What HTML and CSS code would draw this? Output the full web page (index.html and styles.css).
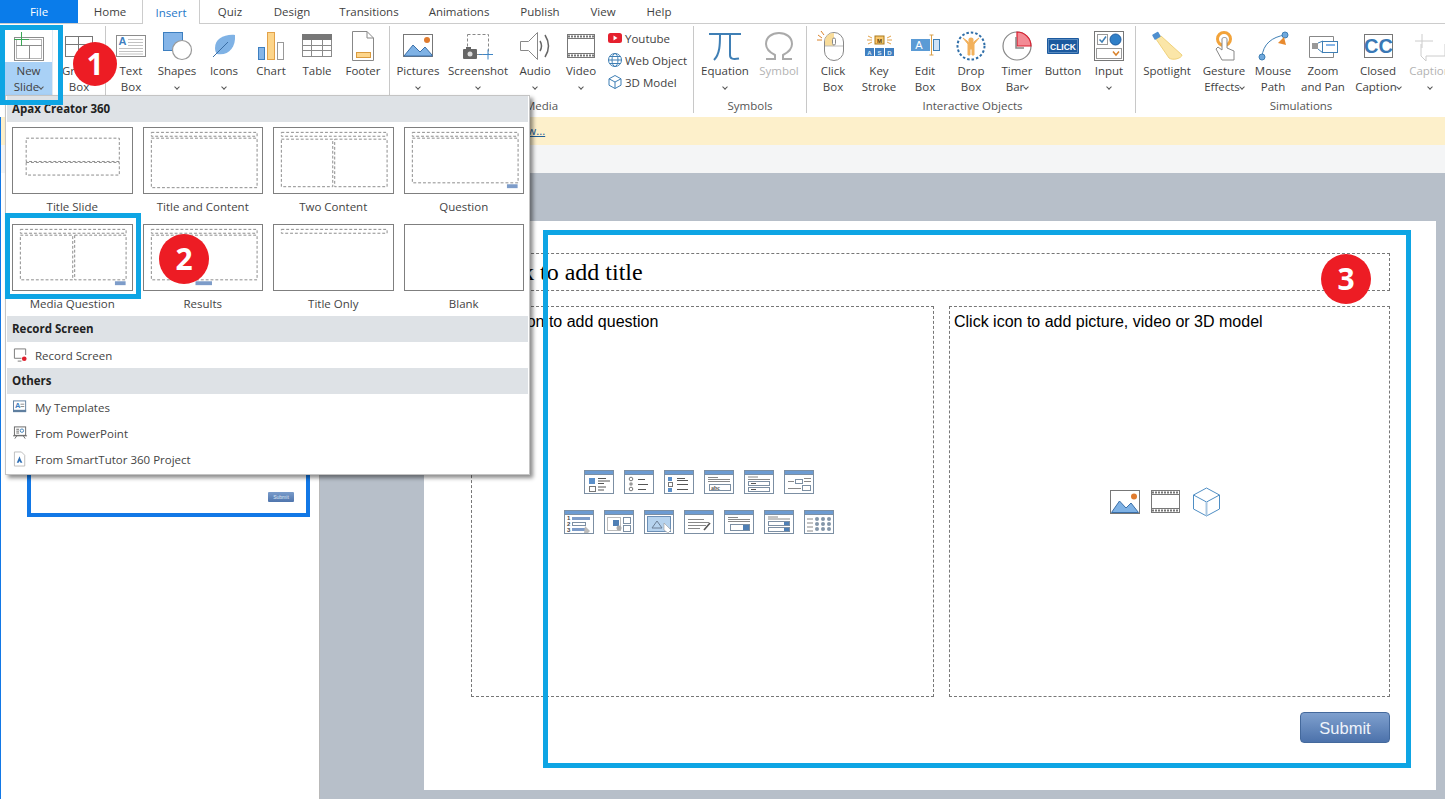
FILE: index.html
```html
<!DOCTYPE html>
<html lang="en">
<head>
    <meta charset="UTF-8">
    <meta name="viewport" content="width=device-width, initial-scale=1.0">
    <title>Apax Creator 360</title>
    <link rel="stylesheet" href="styles.css">
</head>
<body>
<div class="app">
    <!-- shared window frame for the question icons -->
    <svg class="sprite" width="0" height="0">
        <symbol id="qframe" viewBox="0 0 30 24">
            <rect x="0.5" y="0.5" width="29" height="23" fill="#fff" stroke="#7c8fa3"/>
            <rect x="0.5" y="0.5" width="29" height="4" fill="#6c9bd2" stroke="#7c8fa3"/>
        </symbol>
    </svg>

    <div class="tabs">
        <div class="tab tab-file">File</div>
        <div class="tab w64">Home</div>
        <div class="tab tab-active">Insert</div>
        <div class="tab w60">Quiz</div>
        <div class="tab w64">Design</div>
        <div class="tab w90">Transitions</div>
        <div class="tab w90">Animations</div>
        <div class="tab w72">Publish</div>
        <div class="tab w54">View</div>
        <div class="tab w58">Help</div>
    </div>

    <div class="ribbon">
        <div class="group g-slides">
            <div class="items">
                <div class="item item-new w48">
                    <svg class="ic" viewBox="0 0 32 32"><rect x="1.5" y="7.5" width="29" height="23" fill="#fff" stroke="#8c8c8c"/><rect x="3.5" y="9.5" width="25" height="19" fill="none" stroke="#b5b5b5"/><path d="M3 15.5H29M16.5 15V29" stroke="#8c8c8c" fill="none"/><path d="M1 9.5H16M8.5 2V16" stroke="#3aa655" fill="none"/></svg>
                    <div class="lbl">New<br>Slide<i class="chev"></i></div>
                </div>
                <div class="item w52">
                    <svg class="ic" viewBox="0 0 32 32"><rect x="2.5" y="6.5" width="27" height="20" fill="#fff" stroke="#777"/><path d="M2 14.5H30M15.5 6V27" stroke="#777" fill="none"/></svg>
                    <div class="lbl">Group<br>Box</div>
                </div>
            </div>
            <div class="group-name"></div>
        </div>

        <div class="group g-text">
            <div class="items">
                <div class="item w50">
                    <svg class="ic" viewBox="0 0 32 32"><rect x="1.5" y="5.5" width="29" height="21" fill="#fff" stroke="#8c8c8c"/><text x="3.5" y="14.5" class="svg-a">A</text><path d="M13 9.5H28M13 12.5H28M13 15.5H28M4 18.5H28M4 21.5H28M4 24H28" stroke="#c2c2c2" fill="none"/></svg>
                    <div class="lbl">Text<br>Box</div>
                </div>
                <div class="item w42">
                    <svg class="ic" viewBox="0 0 32 32"><rect x="2.5" y="2.5" width="19" height="18" fill="#85b5e8" stroke="#3d7fc0"/><circle cx="21" cy="20" r="9.5" fill="#fff" stroke="#999" stroke-width="1.2"/></svg>
                    <div class="lbl">Shapes<br><i class="chev"></i></div>
                </div>
                <div class="item w52">
                    <svg class="ic" viewBox="0 0 32 32"><path d="M27 5C16 4 7 9 7 18C7 21 8 23 9 24C20 26 28 18 27 5Z" fill="#7fb2e5"/><path d="M5 27L20 12" stroke="#3b6ea5" fill="none"/></svg>
                    <div class="lbl">Icons<br><i class="chev"></i></div>
                </div>
                <div class="item w42">
                    <svg class="ic" viewBox="0 0 32 32"><rect x="3.5" y="17.5" width="6" height="12" fill="#85b5e8" stroke="#3d7fc0"/><rect x="12.5" y="2.5" width="7" height="27" fill="#fdd58a" stroke="#e2a24a"/><rect x="22.5" y="12.5" width="6" height="17" fill="#fff" stroke="#999"/></svg>
                    <div class="lbl">Chart</div>
                </div>
                <div class="item w50">
                    <svg class="ic" viewBox="0 0 32 32"><rect x="1.5" y="4.5" width="29" height="22" fill="#fff" stroke="#8a8a8a"/><rect x="1" y="4" width="30" height="6" fill="#777"/><path d="M1 15.5H31M1 20.5H31M10.5 10V27M21.5 10V27" stroke="#8a8a8a" fill="none"/></svg>
                    <div class="lbl">Table</div>
                </div>
                <div class="item w42">
                    <svg class="ic" viewBox="0 0 32 32"><path d="M5.5 1.5H20L26.5 8V30.5H5.5Z" fill="#fff" stroke="#888"/><path d="M20 1.5V8H26.5" fill="none" stroke="#888"/><rect x="9.5" y="22.5" width="14" height="5" fill="#fdd58a" stroke="#d99a3e"/></svg>
                    <div class="lbl">Footer</div>
                </div>
            </div>
            <div class="group-name"></div>
        </div>

        <div class="group g-media">
            <div class="items">
                <div class="item w56">
                    <svg class="ic" viewBox="0 0 32 32"><rect x="1.5" y="4.5" width="29" height="22" fill="#fff" stroke="#777"/><circle cx="25" cy="10" r="3" fill="#e07b2e"/><path d="M2 26L11 15L18 22L23 17L30 25V26Z" fill="#7fb2e5" stroke="#3a6fa8"/></svg>
                    <div class="lbl">Pictures<br><i class="chev"></i></div>
                </div>
                <div class="item w64">
                    <svg class="ic" viewBox="0 0 32 32"><rect x="5.5" y="4.5" width="21" height="20" fill="none" stroke="#888" stroke-dasharray="3 2"/><rect x="1" y="19" width="14" height="10" rx="1" fill="#666"/><rect x="4" y="17" width="5" height="2" fill="#666"/><circle cx="8" cy="24" r="2.5" fill="#ddd"/><path d="M17 24.5H20M21 24.5H31M26 19.5V29.5" stroke="#3f86c6" fill="none"/></svg>
                    <div class="lbl">Screenshot<br><i class="chev"></i></div>
                </div>
                <div class="item w50">
                    <svg class="ic" viewBox="0 0 32 32"><path d="M1.5 11.5H9.5L18.5 2.5V29.5L9.5 20.5H1.5Z" fill="#fff" stroke="#888"/><path d="M21 11Q24 16 21 21" fill="none" stroke="#666" stroke-width="1.5"/><path d="M26 5Q33 16 26 27" fill="none" stroke="#666" stroke-width="1.5"/></svg>
                    <div class="lbl">Audio<br><i class="chev"></i></div>
                </div>
                <div class="item w42">
                    <svg class="ic" viewBox="0 0 32 32"><rect x="2.5" y="4.5" width="27" height="23" fill="#fff" stroke="#777"/><path d="M2 8.5H30M2 23.5H30" stroke="#777" fill="none"/><path d="M3 6.5H29M3 25.5H29" stroke="#777" stroke-width="2" stroke-dasharray="2 1" fill="none"/></svg>
                    <div class="lbl">Video<br><i class="chev"></i></div>
                </div>
                <div class="side">
                    <div class="side-row">
                        <svg class="ic-s" viewBox="0 0 16 16"><rect x="1" y="3" width="14" height="10" rx="2.5" fill="#e5202e"/><path d="M6.5 5.5L10.5 8L6.5 10.5Z" fill="#fff"/></svg>
                        Youtube
                    </div>
                    <div class="side-row">
                        <svg class="ic-s" viewBox="0 0 16 16"><g fill="none" stroke="#3f7fb5"><circle cx="8" cy="8" r="6.5"/><ellipse cx="8" cy="8" rx="3" ry="6.5"/><path d="M1.5 8H14.5M2.5 4.5H13.5M2.5 11.5H13.5"/></g></svg>
                        Web Object
                    </div>
                    <div class="side-row">
                        <svg class="ic-s" viewBox="0 0 16 16"><g fill="none" stroke="#3f7fb5"><path d="M8 1.5L14 4.8V11.2L8 14.5L2 11.2V4.8Z"/><path d="M2 4.8L8 8L14 4.8M8 8V14.5"/></g></svg>
                        3D Model
                    </div>
                </div>
            </div>
            <div class="group-name">Media</div>
        </div>

        <div class="group g-symbols">
            <div class="items">
                <div class="item w62">
                    <svg class="ic" viewBox="0 0 32 32"><path d="M0 4H32M11 4C11 14 11 24 5 30M21 4V25C21 29 24 29.5 30 28.5" fill="none" stroke="#3f7fb5" stroke-width="2"/></svg>
                    <div class="lbl">Equation<br><i class="chev"></i></div>
                </div>
                <div class="item w46 item-off">
                    <svg class="ic" viewBox="0 0 32 32"><path d="M3 29H12V25C6 22 3 18 3 14C3 7 9 3 16 3C23 3 29 7 29 14C29 18 26 22 20 25V29H29" fill="none" stroke="#aaa" stroke-width="2"/></svg>
                    <div class="lbl">Symbol</div>
                </div>
            </div>
            <div class="group-name">Symbols</div>
        </div>

        <div class="group g-interactive">
            <div class="items">
                <div class="item w46">
                    <svg class="ic" viewBox="0 0 32 32"><rect x="7.5" y="2.5" width="19" height="28" rx="9.5" fill="#fff" stroke="#888"/><path d="M17 3V16H8V12C8 6 12 3 17 3Z" fill="#f8dc9a"/><path d="M8 16H26" stroke="#bbb"/><rect x="15.5" y="8" width="3" height="7" rx="1.5" fill="#fff" stroke="#888"/><path d="M1 5L5 8M4 1L7 5M0 10H5" stroke="#d9822b" fill="none"/></svg>
                    <div class="lbl">Click<br>Box</div>
                </div>
                <div class="item w46">
                    <svg class="ic" viewBox="0 0 32 32"><rect x="12" y="6" width="9" height="8" fill="#f9c86e" stroke="#a97a1e"/><text x="16.5" y="12.5" class="svg-key svg-key-dark">M</text><path d="M5 6L9 8M4 10H9M5 14L9 12M28 6L24 8M29 10H24M28 14L24 12" stroke="#e2a24a" fill="none"/><rect x="2" y="18" width="9" height="8" fill="#3f7fc0"/><rect x="12" y="18" width="9" height="8" fill="#3f7fc0"/><rect x="22" y="18" width="9" height="8" fill="#3f7fc0"/><text x="6.5" y="24.5" class="svg-key">A</text><text x="16.5" y="24.5" class="svg-key">S</text><text x="26.5" y="24.5" class="svg-key">D</text></svg>
                    <div class="lbl">Key<br>Stroke</div>
                </div>
                <div class="item w46">
                    <svg class="ic" viewBox="0 0 32 32"><rect x="2" y="9" width="19" height="12" fill="#5b9bd5"/><text x="10" y="19" class="svg-edit">A</text><rect x="24.5" y="9.5" width="6" height="11" fill="#cfe2f5" stroke="#3f7fb5"/><path d="M22.5 5V25M20.5 5H24.5M20.5 25H24.5" stroke="#d9a04a" fill="none"/></svg>
                    <div class="lbl">Edit<br>Box</div>
                </div>
                <div class="item w46">
                    <svg class="ic" viewBox="0 0 32 32"><circle cx="16" cy="16" r="13.5" fill="none" stroke="#2f6ea8" stroke-width="2" stroke-dasharray="2.5 2"/><circle cx="16" cy="10" r="2.6" fill="#f2b15c"/><path d="M8 8L13 14V25H15V19H17V25H19V14L24 8L18 12.5H14Z" fill="#f2b15c" stroke="#f2b15c"/></svg>
                    <div class="lbl">Drop<br>Box</div>
                </div>
                <div class="item w46">
                    <svg class="ic" viewBox="0 0 32 32"><circle cx="16" cy="16" r="14" fill="#fff" stroke="#888" stroke-width="1.2"/><path d="M16 2A14 14 0 0 1 30 16H16Z" fill="#f38b95" stroke="#d91f2f" stroke-width="1.2"/><path d="M15 7V18H23" fill="none" stroke="#888" stroke-width="1.5"/></svg>
                    <div class="lbl">Timer<br>Bar<i class="chev"></i></div>
                </div>
                <div class="item w46">
                    <svg class="ic" viewBox="0 0 32 32"><rect x="0" y="8" width="32" height="16" rx="1" fill="#1c5a9f"/><rect x="1.5" y="9.5" width="29" height="13" fill="none" stroke="#7fa8d4" stroke-width="0.6"/><text x="16" y="19.5" class="svg-click">CLICK</text></svg>
                    <div class="lbl">Button</div>
                </div>
                <div class="item w46">
                    <svg class="ic" viewBox="0 0 32 32"><rect x="1.5" y="1.5" width="29" height="29" fill="#fff" stroke="#777"/><rect x="4.5" y="4.5" width="10" height="10" fill="#fff" stroke="#999"/><path d="M6.5 9.5L9 12L13 6.5" fill="none" stroke="#3f7fb5" stroke-width="1.5"/><circle cx="22.5" cy="9.5" r="5.5" fill="#2f7fc8" stroke="#1c5a9f"/><rect x="3.5" y="18.5" width="25" height="10" fill="#fff" stroke="#999"/><path d="M20 21.5L23 25L26 21.5" fill="none" stroke="#d9822b" stroke-width="1.5"/></svg>
                    <div class="lbl">Input<br><i class="chev"></i></div>
                </div>
            </div>
            <div class="group-name">Interactive Objects</div>
        </div>

        <div class="group g-simulations">
            <div class="items">
                <div class="item w62">
                    <svg class="ic" viewBox="0 0 32 32"><path d="M5 9L10 6L31 25C31 28 22 31 18 28Z" fill="#fbe6a8" stroke="#f0d27c"/><rect x="2" y="3" width="7" height="6" rx="1" fill="#4f8fcf" transform="rotate(-30 5 6)"/></svg>
                    <div class="lbl">Spotlight</div>
                </div>
                <div class="item w52">
                    <svg class="ic" viewBox="0 0 32 32"><circle cx="16" cy="9" r="6.5" fill="none" stroke="#f2a33a" stroke-width="3"/><path d="M14 9V20L10 17L8 19L14 30H26V21L19 18V9C19 7 14 7 14 9Z" fill="#fff" stroke="#888"/></svg>
                    <div class="lbl">Gesture<br>Effects<i class="chev"></i></div>
                </div>
                <div class="item w46">
                    <svg class="ic" viewBox="0 0 32 32"><path d="M5 27C6 14 15 7 28 5" fill="none" stroke="#3f7fb5"/><circle cx="5" cy="27" r="3" fill="#6fa8dc" stroke="#3f7fb5"/><circle cx="28" cy="5" r="3" fill="#6fa8dc" stroke="#3f7fb5"/><path d="M27 7L29 15L21 13Z" fill="#e88a2e"/></svg>
                    <div class="lbl">Mouse<br>Path</div>
                </div>
                <div class="item w54">
                    <svg class="ic" viewBox="0 0 32 32"><path d="M26.5 11V6.5H2.5V27.5H26.5V23" fill="#fff" stroke="#888"/><rect x="5" y="13" width="6" height="6" fill="#999"/><path d="M11 13L16 11V23L11 19" fill="#fff" stroke="#3f7fb5"/><rect x="15.5" y="11.5" width="15" height="11" fill="#fff" stroke="#3f7fb5"/><rect x="19" y="14" width="9" height="2" fill="#85b5e8"/></svg>
                    <div class="lbl">Zoom<br>and Pan</div>
                </div>
                <div class="item w56">
                    <svg class="ic" viewBox="0 0 32 32"><rect x="2.5" y="4.5" width="28" height="23" fill="#fff" stroke="#777"/><text x="16.5" y="23" class="svg-cc">CC</text></svg>
                    <div class="lbl">Closed<br>Caption<i class="chev"></i></div>
                </div>
                <div class="item w48 item-off">
                    <svg class="ic" viewBox="0 0 32 32"><path d="M8 4V18M1 11H19" stroke="#ccc" fill="none"/><path d="M7 14V26L12 31V26H31V14" fill="none" stroke="#ccc"/></svg>
                    <div class="lbl">Caption<br><i class="chev"></i></div>
                </div>
            </div>
            <div class="group-name">Simulations</div>
        </div>
    </div>

    <div class="lower">
        <div class="notice"><a href="#">View...</a></div>
        <div class="strip"></div>
        <div class="workspace">
            <div class="pane">
                <div class="thumb">
                    <div class="thumb-btn">Submit</div>
                </div>
            </div>
            <div class="stage">
                <div class="slide">
                    <div class="ph ph-title">Click to add title</div>
                    <div class="ph ph-body">
                        <div class="ph-text">Click icon to add question</div>
                        <div class="q-icons">
                            <div class="q-row">
                                <svg class="q" viewBox="0 0 30 24"><use href="#qframe"/><rect x="5" y="8" width="6" height="6" fill="#5b8fc9"/><rect x="5.5" y="16.5" width="6" height="5" fill="#fff" stroke="#777"/><path d="M14 8.5H22M14 11H26M14 13.5H20M14 17H22M14 20H20" stroke="#555" fill="none"/></svg>
                                <svg class="q" viewBox="0 0 30 24"><use href="#qframe"/><circle cx="7" cy="9" r="1.8" fill="none" stroke="#777"/><circle cx="7" cy="14" r="1.8" fill="#999"/><circle cx="7" cy="19" r="1.8" fill="none" stroke="#777"/><path d="M14 9.5H21M14 14.5H24M14 19.5H22" stroke="#555" fill="none"/></svg>
                                <svg class="q" viewBox="0 0 30 24"><use href="#qframe"/><rect x="4" y="7" width="4" height="4" fill="#5b8fc9"/><rect x="4.5" y="12.5" width="4" height="4" fill="#fff" stroke="#777"/><rect x="4" y="18" width="4" height="4" fill="#5b8fc9"/><path d="M13 8.5H21M13 10.5H24M13 14.5H24M13 19.5H24" stroke="#555" fill="none"/></svg>
                                <svg class="q" viewBox="0 0 30 24"><use href="#qframe"/><path d="M4 7.5H14M4 9.5H26M4 11.5H26" stroke="#888" fill="none"/><rect x="5.5" y="14.5" width="21" height="6" fill="#fff" stroke="#7c8fa3"/><text x="7" y="20" class="svg-abc">abc</text></svg>
                                <svg class="q" viewBox="0 0 30 24"><use href="#qframe"/><path d="M4 7H14M4 9.5H26" stroke="#888" fill="none"/><rect x="4.5" y="11.5" width="21" height="4" fill="#fff" stroke="#7c8fa3"/><rect x="4.5" y="17.5" width="21" height="4" fill="#fff" stroke="#7c8fa3"/><path d="M7 13.5H12M7 19.5H12" stroke="#555" fill="none"/></svg>
                                <svg class="q" viewBox="0 0 30 24"><use href="#qframe"/><rect x="11.5" y="9.5" width="7" height="4" fill="#fff" stroke="#7c8fa3"/><rect x="18.5" y="15.5" width="8" height="5" fill="#fff" stroke="#7c8fa3"/><path d="M4 11.5H10M20 8.5H27M20 11.5H27M4 18.5H17" stroke="#888" fill="none"/></svg>
                            </div>
                            <div class="q-row">
                                <svg class="q" viewBox="0 0 30 24"><use href="#qframe"/><text x="3" y="10" class="svg-num">1</text><text x="3" y="16" class="svg-num">2</text><text x="3" y="22" class="svg-num">3</text><rect x="8" y="7" width="18" height="3" fill="#7d9cc9"/><rect x="8.5" y="12.5" width="13" height="3" fill="#fff" stroke="#7c8fa3"/><rect x="8" y="18" width="15" height="3" fill="#7d9cc9"/><path d="M21 16L26 21L24 23H20Z" fill="#bbb"/></svg>
                                <svg class="q" viewBox="0 0 30 24"><use href="#qframe"/><rect x="3.5" y="7.5" width="13" height="13" fill="none" stroke="#777" stroke-dasharray="1 1"/><rect x="9" y="10" width="6" height="6" fill="#4f7fb5"/><rect x="19.5" y="7.5" width="7" height="6" fill="#fff" stroke="#7c8fa3"/><rect x="19.5" y="15.5" width="7" height="6" fill="#fff" stroke="#7c8fa3"/><circle cx="15" cy="18" r="2.5" fill="#aaa"/></svg>
                                <svg class="q" viewBox="0 0 30 24"><use href="#qframe"/><rect x="3.5" y="6.5" width="23" height="15" fill="#b6d3ee" stroke="#6c8fb5"/><path d="M8 18L13 11L18 18Z" fill="none" stroke="#6c7f95"/><path d="M20 13L27 20L24 23L20 20Z" fill="#fff" stroke="#999" stroke-width="0.6"/></svg>
                                <svg class="q" viewBox="0 0 30 24"><use href="#qframe"/><path d="M4 9.5H20M4 12.5H25M4 15.5H22M4 18.5H16" stroke="#888" fill="none"/><path d="M20 20L26 13" stroke="#555" stroke-width="1.6" fill="none"/></svg>
                                <svg class="q" viewBox="0 0 30 24"><use href="#qframe"/><path d="M4 7.5H14M4 9.5H26M4 11.5H26" stroke="#888" fill="none"/><rect x="6.5" y="14.5" width="19" height="6" fill="#fff" stroke="#7c8fa3"/><rect x="19" y="15" width="6" height="5" fill="#4f7fb5"/></svg>
                                <svg class="q" viewBox="0 0 30 24"><use href="#qframe"/><path d="M4 7H14M4 9H26" stroke="#888" fill="none"/><rect x="4.5" y="11.5" width="21" height="4" fill="#fff" stroke="#7c8fa3"/><rect x="4.5" y="17.5" width="21" height="4" fill="#fff" stroke="#7c8fa3"/><rect x="20" y="12" width="5" height="3" fill="#4f7fb5"/><rect x="20" y="18" width="5" height="3" fill="#4f7fb5"/></svg>
                                <svg class="q" viewBox="0 0 30 24"><use href="#qframe"/><path d="M3 9H9M3 13H9M3 17H9M3 21H9" stroke="#888" fill="none"/><g fill="#8496a9"><circle cx="13" cy="9" r="2"/><circle cx="19" cy="9" r="2"/><circle cx="25" cy="9" r="2"/><circle cx="13" cy="14" r="2"/><circle cx="19" cy="14" r="2"/><circle cx="25" cy="14" r="2"/><circle cx="13" cy="19" r="2"/><circle cx="19" cy="19" r="2"/><circle cx="25" cy="19" r="2"/></g></svg>
                            </div>
                        </div>
                    </div>
                    <div class="ph ph-body">
                        <div class="ph-text">Click icon to add picture, video or 3D model</div>
                        <div class="q-icons">
                            <div class="q-row q-row-media">
                                <svg class="m" viewBox="0 0 30 30"><rect x="0.5" y="3.5" width="29" height="23" fill="#fff" stroke="#777"/><circle cx="24" cy="9.5" r="3" fill="#e07b2e"/><path d="M1.5 25.5L9.5 14L16 21L21 16L28.5 25.5Z" fill="#7fb2e5" stroke="#3a6fa8"/></svg>
                                <svg class="m" viewBox="0 0 30 30"><rect x="0.5" y="3.5" width="28" height="22" fill="#fff" stroke="#777"/><path d="M0 7.5H29M0 21.5H29" stroke="#777" fill="none"/><path d="M1 5.5H28M1 23.5H28" stroke="#777" stroke-width="2.2" stroke-dasharray="2 1" fill="none"/></svg>
                                <svg class="m" viewBox="0 0 30 30"><g fill="none" stroke="#4f8ec4"><path d="M14.5 1L27.5 8V22L14.5 29L1.5 22V8Z"/><path d="M1.5 8L14.5 15L27.5 8"/></g><path d="M14.5 15V29" stroke="#a9c6e0" stroke-width="2"/></svg>
                            </div>
                        </div>
                    </div>
                    <div class="slide-foot">
                        <div class="submit">Submit</div>
                    </div>
                </div>
            </div>
        </div>
    </div>

    <!-- New Slide dropdown -->
    <div class="menu">
        <div class="menu-head">Apax Creator 360</div>
        <div class="layouts">
            <div class="layout">
                <svg class="layout-box" viewBox="0 0 120 67"><g class="dash"><rect x="12.5" y="10.5" width="96" height="24"/><rect x="12.5" y="35.5" width="96" height="13"/></g></svg>
                <div class="layout-name">Title Slide</div>
            </div>
            <div class="layout">
                <svg class="layout-box" viewBox="0 0 120 67"><g class="dash"><rect x="6.5" y="4.5" width="109" height="4"/><rect x="6.5" y="10.5" width="109" height="51"/></g></svg>
                <div class="layout-name">Title and Content</div>
            </div>
            <div class="layout">
                <svg class="layout-box" viewBox="0 0 120 67"><g class="dash"><rect x="6.5" y="4.5" width="109" height="4"/><rect x="6.5" y="11.5" width="53" height="49"/><rect x="61.5" y="11.5" width="54" height="49"/></g></svg>
                <div class="layout-name">Two Content</div>
            </div>
            <div class="layout">
                <svg class="layout-box" viewBox="0 0 120 67"><g class="dash"><rect x="6.5" y="4.5" width="109" height="4"/><rect x="6.5" y="10.5" width="109" height="46"/></g><rect x="104" y="58" width="11" height="4" class="mini-btn"/></svg>
                <div class="layout-name">Question</div>
            </div>
            <div class="layout">
                <svg class="layout-box" viewBox="0 0 120 67"><g class="dash"><rect x="6.5" y="4.5" width="109" height="4"/><rect x="6.5" y="10.5" width="54" height="46"/><rect x="62.5" y="10.5" width="53" height="46"/></g><rect x="104" y="58" width="11" height="4" class="mini-btn"/></svg>
                <div class="layout-name">Media Question</div>
            </div>
            <div class="layout">
                <svg class="layout-box" viewBox="0 0 120 67"><g class="dash"><rect x="6.5" y="4.5" width="109" height="4"/><rect x="6.5" y="10.5" width="109" height="46"/></g><rect x="52" y="58" width="17" height="4" class="mini-btn"/></svg>
                <div class="layout-name">Results</div>
            </div>
            <div class="layout">
                <svg class="layout-box" viewBox="0 0 120 67"><g class="dash"><rect x="6.5" y="4.5" width="109" height="4"/></g></svg>
                <div class="layout-name">Title Only</div>
            </div>
            <div class="layout">
                <svg class="layout-box" viewBox="0 0 120 67"></svg>
                <div class="layout-name">Blank</div>
            </div>
        </div>
        <div class="menu-head">Record Screen</div>
        <div class="menu-item">
            <svg class="ic-m" viewBox="0 0 16 16"><path d="M13.5 8V1.5H1.5V11.5H9M5 14.5H9" fill="none" stroke="#777"/><circle cx="12" cy="12" r="2.5" fill="#e0202e"/></svg>
            Record Screen
        </div>
        <div class="menu-head">Others</div>
        <div class="menu-item">
            <svg class="ic-m" viewBox="0 0 16 16"><rect x="0.5" y="1.5" width="13" height="11" fill="#fff" stroke="#5f7f9f"/><rect x="0" y="11" width="14" height="2.5" fill="#5f7f9f"/><text x="2" y="9" class="svg-tpl">A</text><path d="M8 5H12M8 7.5H12" stroke="#888" fill="none"/></svg>
            My Templates
        </div>
        <div class="menu-item">
            <svg class="ic-m" viewBox="0 0 16 16"><rect x="1.5" y="1.5" width="12" height="9" fill="#fff" stroke="#666"/><path d="M3.5 4H6.5M3.5 6H6.5M3.5 8H6.5M4 11L2 14M11 11L13 14M0 11H15" stroke="#666" fill="none"/><circle cx="9.5" cy="5.5" r="1.8" fill="none" stroke="#3f7fb5"/></svg>
            From PowerPoint
        </div>
        <div class="menu-item">
            <svg class="ic-m" viewBox="0 0 16 16"><path d="M1.5 0.5H9L12.5 4V15.5H1.5Z" fill="#fff" stroke="#bbb"/><path d="M4 12L7 5L8 8L10 12H8L7 10L6 12Z" fill="#2f6fb5"/></svg>
            From SmartTutor 360 Project
        </div>
    </div>

    <!-- callouts drawn over the screenshot -->
    <div class="callout callout-1"></div>
    <div class="callout callout-2"></div>
    <div class="callout callout-3"></div>
    <div class="badge badge-1">1</div>
    <div class="badge badge-2">2</div>
    <div class="badge badge-3">3</div>
</div>
</body>
</html>
```

FILE: styles.css
```css
* {
    box-sizing: border-box;
}

body {
    margin: 0;
    font-family: "Open Sans", "Liberation Sans", sans-serif;
    font-size: 11.5px;
    color: #3f3f3f;
    overflow: hidden;
}

.app {
    position: relative;
    width: 1445px;
    height: 799px;
    display: flex;
    flex-direction: column;
    overflow: hidden;
    background: #fff;
}

.sprite {
    display: block;
    height: 0;
}

/* tab row */
.tabs {
    display: flex;
    height: 24px;
    border-bottom: 1px solid #ccc;
    flex-shrink: 0;
}

.tab {
    display: flex;
    align-items: center;
    justify-content: center;
    height: 23px;
}

.tab-file {
    width: 78px;
    background: #0a7cea;
    color: #fff;
}

.tab-active {
    width: 58px;
    height: 24px;
    background: #fff;
    color: #1f78c8;
    border-left: 1px solid #ccc;
    border-right: 1px solid #ccc;
}

.w46 { width: 46px; }
.w48 { width: 48px; }
.w50 { width: 50px; }
.w52 { width: 52px; }
.w54 { width: 54px; }
.w56 { width: 56px; }
.w58 { width: 58px; }
.w60 { width: 60px; }
.w62 { width: 62px; }
.w64 { width: 64px; }
.w42 { width: 42px; }
.w72 { width: 72px; }
.w90 { width: 90px; }

/* ribbon */
.ribbon {
    display: flex;
    height: 93px;
    padding-top: 2px;
    flex-shrink: 0;
    overflow: hidden;
}

.group {
    height: 87px;
    flex-shrink: 0;
    border-right: 1px solid #c8c8c8;
}

.g-slides { width: 106px; padding-left: 5px; }
.g-text { width: 284px; }
.g-media { width: 304px; }
.g-symbols { width: 113px; }
.g-interactive { width: 329px; padding-left: 3px; }
.g-simulations { width: 330px; border-right: none; }

.items {
    display: flex;
    height: 69px;
}

.item {
    display: flex;
    flex-direction: column;
    align-items: center;
    flex-shrink: 0;
    padding-top: 4px;
    text-align: center;
}

.ic {
    display: block;
    width: 32px;
    height: 32px;
    flex-shrink: 0;
    margin-bottom: 1px;
}

.lbl {
    line-height: 16px;
    white-space: nowrap;
}

.item-off {
    color: #b3b3b3;
}

.item-new {
    border-right: 1px solid #dfe9f3;
}

.item-new .lbl {
    align-self: stretch;
    background: #a9d1f6;
    margin-top: -1px;
    padding-top: 1px;
    height: 34px;
}

.chev {
    display: inline-block;
    width: 4px;
    height: 4px;
    margin: 0 0 2px 4px;
    border-right: 1px solid #555;
    border-bottom: 1px solid #555;
    transform: rotate(45deg);
}

.lbl br + .chev {
    margin-left: 0;
}

.side {
    padding: 1px 0 0 5px;
}

.side-row {
    display: flex;
    align-items: center;
    gap: 2px;
    height: 22px;
    white-space: nowrap;
}

.ic-s {
    width: 16px;
    height: 16px;
    flex-shrink: 0;
}

.group-name {
    margin-top: 3px;
    height: 15px;
    line-height: 15px;
    text-align: center;
    color: #555;
}

/* text inside the little svg icons */
.svg-a { font: bold 11px "Liberation Sans", sans-serif; fill: #3f7fc0; }
.svg-key { font: bold 6px "Liberation Sans", sans-serif; fill: #dcebfa; text-anchor: middle; }
.svg-key-dark { fill: #5a3d0a; }
.svg-edit { font: 11px "Liberation Sans", sans-serif; fill: #fff; text-anchor: middle; }
.svg-click { font: bold 8.5px "Liberation Sans", sans-serif; fill: #fff; text-anchor: middle; }
.svg-cc { font: bold 20px "Liberation Sans", sans-serif; fill: #3a78b5; text-anchor: middle; }
.svg-abc { font: bold 6px "Liberation Serif", serif; fill: #555; }
.svg-num { font: bold 6px "Liberation Sans", sans-serif; fill: #444; }
.svg-tpl { font: bold 8px "Liberation Sans", sans-serif; fill: #3f7fc0; }

/* everything under the ribbon */
.lower {
    flex: 1;
    display: flex;
    flex-direction: column;
    min-height: 0;
    border-left: 1px solid #1278e6;
}

.notice {
    height: 28px;
    background: #fdf0cb;
    padding-left: 510px;
    line-height: 28px;
    flex-shrink: 0;
}

.notice a {
    color: #1f5f99;
}

.strip {
    height: 28px;
    background: #f4f5f6;
    flex-shrink: 0;
}

.workspace {
    flex: 1;
    display: flex;
    min-height: 0;
}

.pane {
    width: 319px;
    flex-shrink: 0;
    background: #fff;
    border-right: 1px solid #b9b9b9;
    padding: 185px 0 0 26px;
}

.thumb {
    width: 283px;
    height: 159px;
    border: 4px solid #1278e6;
    display: flex;
    justify-content: flex-end;
    align-items: flex-end;
    padding: 0 12px 11px 0;
}

.thumb-btn {
    width: 26px;
    height: 10px;
    background: linear-gradient(#7a9ccb, #4f75ad);
    color: #dfe8f4;
    border-radius: 1px;
    font: 5px/10px "Liberation Sans", sans-serif;
    text-align: center;
}

.stage {
    flex: 1;
    background: #b7bfc9;
    padding: 48px 9px 9px 104px;
}

.slide {
    width: 1012px;
    height: 569px;
    background: #fff;
    padding: 32px 46px 0 47px;
    display: grid;
    grid-template-columns: 463px 441px;
    grid-template-rows: 38px 391px auto;
    column-gap: 15px;
    row-gap: 15px;
    color: #000;
    font-family: "Liberation Sans", sans-serif;
}

.ph {
    border: 1px dashed #777;
}

.ph-title {
    grid-column: 1 / 3;
    font: 24px/36px "Liberation Serif", serif;
    padding-left: 10px;
}

.ph-body {
    display: grid;
}

.ph-body > * {
    grid-area: 1 / 1;
}

.ph-text {
    align-self: start;
    padding: 5px 0 0 4px;
    font-size: 16px;
    line-height: 19px;
    white-space: nowrap;
}

.q-icons {
    align-self: center;
    display: flex;
    flex-direction: column;
    align-items: center;
    gap: 16px;
    padding-right: 8px;
}

.q-row {
    display: flex;
    gap: 10px;
}

.q-row-media {
    gap: 11px;
}

.q {
    display: block;
    width: 30px;
    height: 24px;
}

.m {
    display: block;
    width: 30px;
    height: 30px;
}

.slide-foot {
    grid-column: 1 / 3;
    display: flex;
    justify-content: flex-end;
}

.submit {
    width: 90px;
    height: 31px;
    background: linear-gradient(#7fa0ce, #4c72ab);
    border: 1px solid #44699c;
    border-radius: 4px;
    color: #eef3fa;
    font-size: 16.5px;
    line-height: 30px;
    text-align: center;
}

/* New Slide dropdown */
.menu {
    position: absolute;
    left: 5px;
    top: 95px;
    width: 525px;
    height: 380px;
    background: #fff;
    border: 1px solid #c4c4c4;
    padding: 0 1px;
    box-shadow: 3px 3px 4px rgba(0, 0, 0, 0.45);
    z-index: 5;
}

.menu-head {
    height: 26px;
    line-height: 26px;
    padding-left: 5px;
    background: #dee2e6;
    font-weight: bold;
    color: #222;
}

.layouts {
    display: grid;
    grid-template-columns: repeat(4, 120.5px);
    column-gap: 10px;
    row-gap: 9px;
    padding: 5px 0 4px 5px;
}

.layout-box {
    display: block;
    width: 100%;
    height: 67px;
    border: 1px solid #7f7f7f;
    background: #fff;
}

.dash {
    fill: none;
    stroke: #8a8a8a;
    stroke-dasharray: 3 2;
}

.mini-btn {
    fill: #7d9cc9;
}

.layout-name {
    margin-top: 5px;
    line-height: 16px;
    text-align: center;
    color: #444;
}

.menu-item {
    display: flex;
    align-items: center;
    gap: 7px;
    height: 26px;
    padding-left: 6px;
    color: #444;
}

.ic-m {
    width: 15px;
    height: 16px;
    flex-shrink: 0;
}

/* numbered callouts */
.callout {
    position: absolute;
    border: 5px solid #0ea5e4;
    z-index: 6;
}

.callout-1 {
    left: 0;
    top: 25px;
    width: 63px;
    height: 80px;
}

.callout-2 {
    left: 5px;
    top: 213px;
    width: 136px;
    height: 86px;
}

.callout-3 {
    left: 543px;
    top: 230px;
    width: 868px;
    height: 538px;
}

.badge {
    position: absolute;
    width: 50px;
    height: 50px;
    border-radius: 50%;
    background: #ed1c24;
    color: #fff;
    font: bold 30px/50px "Open Sans", sans-serif;
    text-align: center;
    z-index: 7;
}

.badge-1 {
    left: 73px;
    top: 42px;
    width: 44px;
    height: 44px;
    line-height: 44px;
}

.badge-2 {
    left: 159px;
    top: 234px;
}

.badge-3 {
    left: 1321px;
    top: 254px;
}
```
